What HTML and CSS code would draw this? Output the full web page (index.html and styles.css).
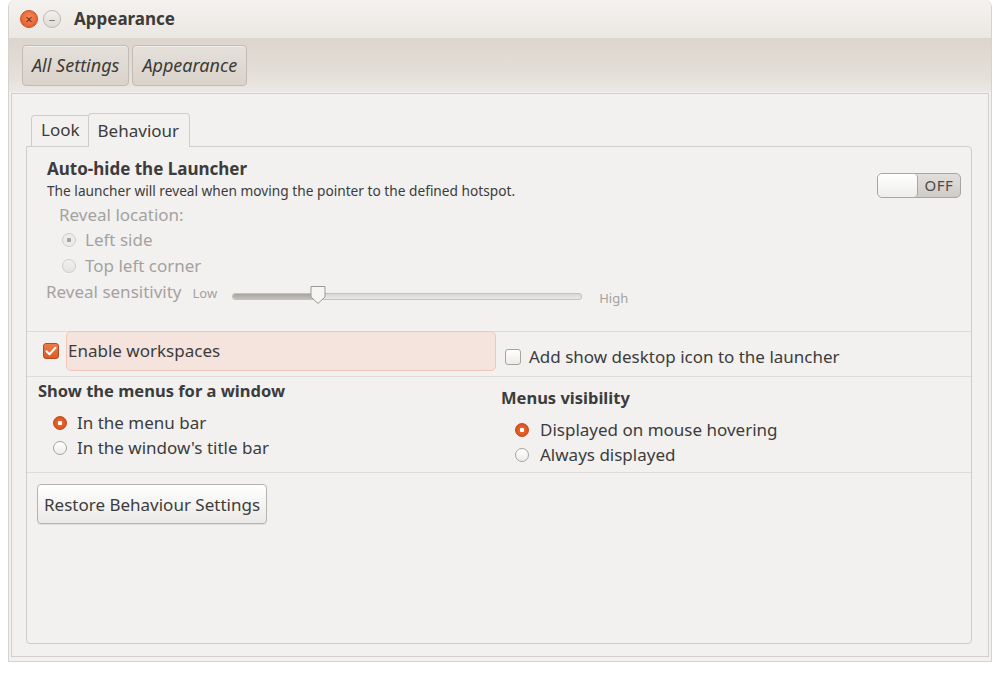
FILE: index.html
```html
<!DOCTYPE html>
<html lang="en">
<head>
    <meta charset="UTF-8">
    <title>Appearance</title>
    <link rel="stylesheet" href="styles.css">
</head>
<body>
    <div class="window">
        <div class="titlebar">
            <span class="wm-btn wm-close">&times;</span>
            <span class="wm-btn wm-min">&ndash;</span>
            <span class="title">Appearance</span>
        </div>
        <div class="toolbar">
            <button class="tool-btn">All Settings</button>
            <button class="tool-btn">Appearance</button>
        </div>

        <div class="frame">
            <div class="tabs">
                <div class="tab">Look</div>
                <div class="tab active">Behaviour</div>
            </div>
            <div class="page">
                <div class="launcher">
                    <div class="launcher-text">
                        <div class="heading">Auto-hide the Launcher</div>
                        <div class="subtitle">The launcher will reveal when moving the pointer to the defined hotspot.</div>
                        <div class="reveal">
                            <div class="muted">Reveal location:</div>
                            <label class="radio-row muted">
                                <span class="radio disabled checked"></span>Left side
                            </label>
                            <label class="radio-row muted">
                                <span class="radio disabled"></span>Top left corner
                            </label>
                        </div>
                        <div class="sensitivity">
                            <span class="muted">Reveal sensitivity</span>
                            <span class="small muted">Low</span>
                            <div class="slider">
                                <div class="slider-fill"></div>
                                <svg class="slider-knob" viewBox="0 0 18 20" width="18" height="20">
                                    <path d="M2 1.5h14v10.5l-7 6.5l-7-6.5z" fill="#f6f5f4" stroke="#9b9894" stroke-width="1"/>
                                </svg>
                            </div>
                            <span class="small muted high">High</span>
                        </div>
                    </div>
                    <div class="switch">
                        <span class="switch-knob"></span>
                        <span class="switch-label">OFF</span>
                    </div>
                </div>

                <div class="workspaces">
                    <div class="cell left">
                        <span class="checkbox checked">
                            <svg viewBox="0 0 16 16" width="16" height="16"><path d="M3.5 8.2l3 3l6-6.5" fill="none" stroke="#fff" stroke-width="2" stroke-linecap="round" stroke-linejoin="round"/></svg>
                        </span>
                        <span class="focus-box">Enable workspaces</span>
                    </div>
                    <div class="cell right">
                        <span class="checkbox"></span>
                        <span>Add show desktop icon to the launcher</span>
                    </div>
                </div>

                <div class="menus">
                    <div class="col left">
                        <div class="heading small-heading">Show the menus for a window</div>
                        <label class="radio-row"><span class="radio checked"></span>In the menu bar</label>
                        <label class="radio-row"><span class="radio"></span>In the window's title bar</label>
                    </div>
                    <div class="col right">
                        <div class="heading small-heading">Menus visibility</div>
                        <label class="radio-row"><span class="radio checked"></span>Displayed on mouse hovering</label>
                        <label class="radio-row"><span class="radio"></span>Always displayed</label>
                    </div>
                </div>

                <div class="restore">
                    <button class="push-btn">Restore Behaviour Settings</button>
                </div>
            </div>
        </div>
    </div>
</body>
</html>
```

FILE: styles.css
```css
body {
    margin: 0;
    background: #fff;
    font-family: "Noto Sans", "Open Sans", sans-serif;
    font-size: 17px;
    line-height: 1.3;
    color: #3c3c3c;
}
.window {
    margin-left: 8px;
    width: 984px;
    height: 662px;
    background: #f2f1f0;
    border-left: 1px solid #d6d3cf;
    border-right: 1px solid #d6d3cf;
    border-bottom: 1px solid #d6d3cf;
    border-radius: 7px 7px 0 0;
    box-sizing: border-box;
    display: flex;
    flex-direction: column;
}
.titlebar {
    height: 38px;
    display: flex;
    align-items: center;
    padding-left: 11px;
    background: linear-gradient(#f4f2ef, #ebe7e3);
    border-radius: 7px 7px 0 0;
}
.wm-btn {
    width: 16px;
    height: 16px;
    border-radius: 50%;
    display: flex;
    align-items: center;
    justify-content: center;
    font-size: 13px;
    line-height: 1;
    margin-right: 5px;
}
.wm-close {
    background: radial-gradient(circle at 50% 40%, #f58a5c, #e0531f);
    color: #7a2a10;
    border: 1px solid #c9501f;
}
.wm-min {
    background: linear-gradient(#f3f1ee, #dedad5);
    color: #7e7a75;
    border: 1px solid #bdb8b2;
}
.title {
    margin-left: 8px;
    font-weight: bold;
    font-size: 17px;
    color: #3c3b37;
}
.toolbar {
    height: 54px;
    display: flex;
    align-items: center;
    gap: 3px;
    padding: 0 13px;
    box-sizing: border-box;
    background: linear-gradient(#dcd5cd, #e4dfd9 70%, #ebe7e3);
}
.tool-btn {
    height: 41px;
    padding: 0 9px;
    border: 1px solid #c2bbb3;
    border-radius: 4px;
    background: linear-gradient(#e5e0da, #dad3cb);
    font-family: inherit;
    font-style: italic;
    font-size: 18px;
    color: #3c3b37;
    box-shadow: inset 0 1px 0 rgba(255, 255, 255, 0.5);
}
.frame {
    flex: 1;
    margin: 1px 2px 4px 2px;
    border: 1px solid #d3d0cc;
    padding: 17px 16px 12px 14px;
    display: flex;
    flex-direction: column;
}
.tabs {
    display: flex;
    align-items: flex-end;
    padding-left: 5px;
    height: 35px;
}
.tab {
    padding: 3px 8px 5px 9px;
    border: 1px solid #d0cdc9;
    border-bottom: none;
    border-right: none;
    border-radius: 4px 0 0 0;
    line-height: 22px;
}
.tab.active {
    padding: 6px 10px 5px 9px;
    border-right: 1px solid #d0cdc9;
    border-radius: 4px 4px 0 0;
    background: #f2f1f0;
    margin-bottom: -1px;
    position: relative;
}
.page {
    flex: 1;
    border: 1px solid #d0cdc9;
    border-radius: 0 4px 4px 4px;
    display: flex;
    flex-direction: column;
}
.launcher {
    display: flex;
    justify-content: space-between;
    align-items: flex-start;
    padding: 11px 10px 0 20px;
    height: 185px;
    box-sizing: border-box;
    border-bottom: 1px solid #dedcd9;
}
.heading {
    font-weight: bold;
    font-size: 17px;
    line-height: 22px;
}
.subtitle {
    font-size: 13.7px;
    line-height: 21px;
}
.muted {
    color: #a4a29f;
}
.reveal {
    padding-left: 12px;
    margin-top: 2px;
}
.reveal .muted:first-child {
    line-height: 24px;
}
.radio-row {
    display: flex;
    align-items: center;
    gap: 9px;
    line-height: 25px;
}
.reveal .radio-row {
    padding-left: 3px;
    line-height: 26px;
}
.radio {
    width: 14px;
    height: 14px;
    border-radius: 50%;
    border: 1px solid #a8a39d;
    background: linear-gradient(#ffffff, #ecebe9);
    box-sizing: border-box;
    position: relative;
    flex: none;
}
.radio.checked {
    border-color: #c4481a;
    background: radial-gradient(circle, #fff 2px, #e6652f 2.5px, #d9531e 6px);
}
.radio.disabled {
    border-color: #cfccc8;
    background: linear-gradient(#f1f0ef, #e6e4e2);
}
.radio.disabled.checked {
    background: radial-gradient(circle, #a5a29e 2px, #ecebe9 2.5px);
}
.sensitivity {
    display: flex;
    align-items: center;
    height: 26px;
    margin-left: -1px;
}
.small {
    font-size: 13px;
}
.sensitivity .small {
    margin-left: 11px;
    margin-top: 3px;
}
.slider {
    position: relative;
    width: 348px;
    height: 5px;
    margin-left: 15px;
    margin-top: 8px;
    border: 1px solid #c4c1bd;
    border-radius: 3px;
    background: linear-gradient(#d9d7d4, #eceae8);
}
.slider-fill {
    width: 84px;
    height: 100%;
    border-radius: 3px 0 0 3px;
    background: linear-gradient(#a9a6a2, #c3c0bc);
}
.slider-knob {
    position: absolute;
    left: 76px;
    top: -9px;
}
.sensitivity .high {
    margin-left: 17px;
    margin-top: 12px;
}
.switch {
    margin-top: 15px;
    width: 84px;
    height: 25px;
    border: 1px solid #a9a6a2;
    border-radius: 5px;
    display: flex;
    overflow: hidden;
    background: linear-gradient(#e1dfdc, #cfccc8);
    box-sizing: border-box;
}
.switch-knob {
    width: 39px;
    background: linear-gradient(#ffffff, #eeedeb);
    border-right: 1px solid #a9a6a2;
    border-radius: 4px;
}
.switch-label {
    flex: 1;
    text-align: center;
    font-size: 15px;
    line-height: 23px;
    color: #4c4a48;
    letter-spacing: 0.5px;
}
.workspaces {
    display: flex;
    height: 44px;
    border-bottom: 1px solid #dedcd9;
}
.cell {
    display: flex;
    align-items: center;
}
.cell.left {
    width: 472px;
    padding-left: 16px;
    box-sizing: border-box;
    gap: 7px;
    margin-top: -6px;
}
.cell.right {
    gap: 8px;
    padding-left: 6px;
    margin-top: 6px;
}
.checkbox {
    width: 16px;
    height: 16px;
    border-radius: 3px;
    border: 1px solid #a8a39d;
    background: linear-gradient(#ffffff, #ecebe9);
    box-sizing: border-box;
    display: flex;
    flex: none;
}
.checkbox.checked {
    border-color: #b8491e;
    background: linear-gradient(#ef7a48, #dd5a25);
}
.checkbox.checked svg {
    margin: -1px;
}
.focus-box {
    flex: 1;
    height: 40px;
    line-height: 38px;
    padding-left: 1px;
    margin-right: 3px;
    box-sizing: border-box;
    background: #f5e4de;
    border: 1px solid #f1c6b5;
    border-radius: 5px;
}
.menus {
    display: flex;
    height: 95px;
    border-bottom: 1px solid #dedcd9;
}
.col.left {
    width: 474px;
    padding: 3px 0 0 11px;
    box-sizing: border-box;
}
.col.right {
    padding-top: 10px;
}
.small-heading {
    font-size: 16.5px;
    margin-bottom: 8px;
}
.col .radio-row {
    padding-left: 15px;
    gap: 10px;
}
.col.right .radio-row {
    padding-left: 14px;
    gap: 11px;
}
.restore {
    padding: 11px 10px;
}
.push-btn {
    height: 40px;
    padding: 0 6px;
    font-family: inherit;
    font-size: 17px;
    color: #3c3c3c;
    border: 1px solid #b7b3ae;
    border-radius: 4px;
    background: linear-gradient(#ffffff, #eae9e7);
    box-shadow: 0 1px 0 rgba(0, 0, 0, 0.08);
}
```
